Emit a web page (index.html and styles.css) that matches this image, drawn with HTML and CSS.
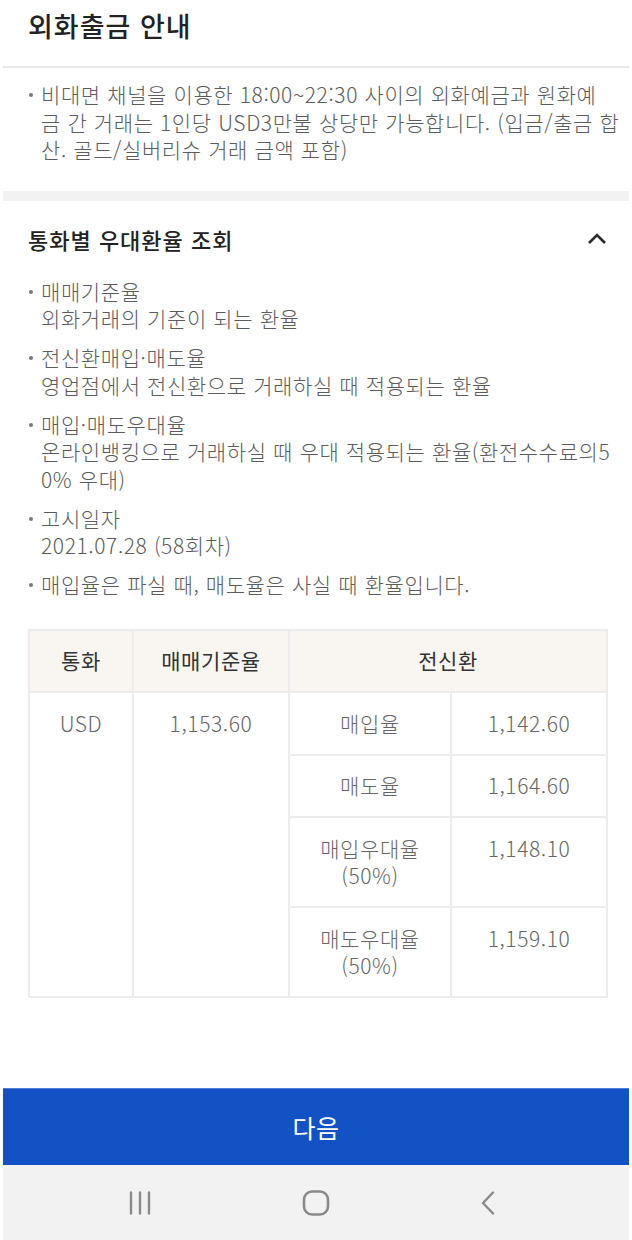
FILE: index.html
```html
<!DOCTYPE html>
<html lang="ko">
<head>
<meta charset="utf-8">
<title>외화출금 안내</title>
<link rel="stylesheet" href="styles.css">
</head>
<body>
<div class="screen">
  <header class="top">
    <h1 class="title">외화출금 안내</h1>
  </header>
  <main class="main">
    <section class="notice">
      <ul class="bullets">
        <li><div>비대면 채널을 이용한 18:00~22:30 사이의 외화예금과 원화예<br>금 간 거래는 1인당 USD3만불 상당만 가능합니다. (입금/출금 합<br>산. 골드/실버리슈 거래 금액 포함)</div></li>
      </ul>
    </section>
    <section class="rates">
      <div class="rates-head">
        <h2 class="sub-title">통화별 우대환율 조회</h2>
        <svg class="chev" width="22" height="14" viewBox="0 0 22 14"><path d="M3 12 L11 4 L19 12" fill="none" stroke="#2b2b2b" stroke-width="2.6" stroke-linecap="butt"/></svg>
      </div>
      <ul class="bullets defs">
        <li><div>매매기준율<br>외화거래의 기준이 되는 환율</div></li>
        <li><div>전신환매입·매도율<br>영업점에서 전신환으로 거래하실 때 적용되는 환율</div></li>
        <li><div>매입·매도우대율<br>온라인뱅킹으로 거래하실 때 우대 적용되는 환율(환전수수료의5<br>0% 우대)</div></li>
        <li><div>고시일자<br>2021.07.28 (58회차)</div></li>
        <li><div>매입율은 파실 때, 매도율은 사실 때 환율입니다.</div></li>
      </ul>
      <table class="rate-table">
        <colgroup>
          <col class="c1"><col class="c2"><col class="c3"><col class="c4">
        </colgroup>
        <thead>
          <tr><th>통화</th><th>매매기준율</th><th colspan="2">전신환</th></tr>
        </thead>
        <tbody>
          <tr><td rowspan="4">USD</td><td rowspan="4">1,153.60</td><td>매입율</td><td>1,142.60</td></tr>
          <tr><td>매도율</td><td>1,164.60</td></tr>
          <tr><td>매입우대율<br>(50%)</td><td>1,148.10</td></tr>
          <tr><td>매도우대율<br>(50%)</td><td>1,159.10</td></tr>
        </tbody>
      </table>
    </section>
  </main>
  <button class="next-btn" type="button">다음</button>
  <nav class="sysnav">
    <svg class="nav-ico" width="24" height="24" viewBox="0 0 24 24"><path d="M3 1.5 V22.5 M12 1.5 V22.5 M21 1.5 V22.5" stroke="#8a8a8a" stroke-width="2.4" stroke-linecap="round" fill="none"/></svg>
    <svg class="nav-ico" width="28" height="26" viewBox="0 0 28 26"><rect x="2" y="1.5" width="24" height="23" rx="8" ry="8" fill="none" stroke="#8a8a8a" stroke-width="2.6"/></svg>
    <svg class="nav-ico" width="16" height="24" viewBox="0 0 16 24"><path d="M13 1.5 L3 12 L13 22.5" fill="none" stroke="#8a8a8a" stroke-width="2.4" stroke-linecap="round" stroke-linejoin="round"/></svg>
  </nav>
</div>
</body>
</html>
```

FILE: styles.css
```css
* { box-sizing: border-box; }
html, body { margin: 0; padding: 0; background: #fff; }
body {
  font-family: "Noto Sans CJK KR", "Noto Sans", sans-serif;
  color: #5c5c5c;
}
.screen {
  margin: 0 3px;
  min-height: 1240px;
  display: flex;
  flex-direction: column;
}
.top {
  padding: 8px 25px 22px;
  border-bottom: 2px solid #e8e8e8;
}
.title {
  margin: 0;
  font-size: 27px;
  line-height: 36px;
  font-weight: 500;
  color: #222;
  letter-spacing: 1px;
}
.main { flex: 1; }
.notice {
  padding: 13px 4px 27px 25px;
}
.bullets {
  list-style: none;
  margin: 0;
  padding: 0;
  font-size: 21px;
  line-height: 27.5px;
  font-weight: 300;
  color: #5c5c5c;
  white-space: nowrap;
  letter-spacing: 0.6px;
}
.bullets li {
  display: flex;
  margin-bottom: 11.5px;
}
.bullets li:last-child { margin-bottom: 0; }
.bullets li::before {
  content: "";
  flex: 0 0 auto;
  width: 4px;
  height: 4px;
  border-radius: 50%;
  background: #777;
  margin: 12px 8px 0 1px;
}
.rates {
  border-top: 10px solid #f2f2f2;
  padding: 23px 23px 40px 25px;
}
.rates-head {
  display: flex;
  align-items: center;
  justify-content: space-between;
}
.sub-title {
  margin: 0;
  font-size: 22px;
  line-height: 30px;
  font-weight: 500;
  color: #222;
  letter-spacing: 1px;
}
.chev { margin-right: -2px; margin-top: -2px; }
.defs { margin-top: 24px; }
.rate-table {
  margin-top: 30px;
  width: 578px;
  border-collapse: collapse;
  table-layout: fixed;
  font-size: 21px;
  line-height: 27.5px;
  font-weight: 300;
  color: #666;
  text-align: center;
}
.c1 { width: 104px; }
.c2 { width: 156px; }
.c3 { width: 162px; }
.c4 { width: 156px; }
.rate-table th, .rate-table td {
  border: 2px solid #ececec;
  padding: 16.5px 2px;
  vertical-align: top;
  letter-spacing: 0.6px;
}
.rate-table th {
  background: #f9f6f1;
  font-weight: 400;
  color: #333;
}
.next-btn {
  display: block;
  width: 100%;
  height: 77px;
  border: 0;
  border-top: 1px solid #4d7fd6;
  margin: 0;
  padding: 0;
  background: #1352c4;
  color: #fff;
  font-family: inherit;
  font-size: 25px;
  font-weight: 400;
  letter-spacing: 0.5px;
}
.sysnav {
  height: 75px;
  background: #f2f2f2;
  display: flex;
  align-items: center;
  justify-content: space-between;
  padding: 0 133px 0 125px;
}
```
